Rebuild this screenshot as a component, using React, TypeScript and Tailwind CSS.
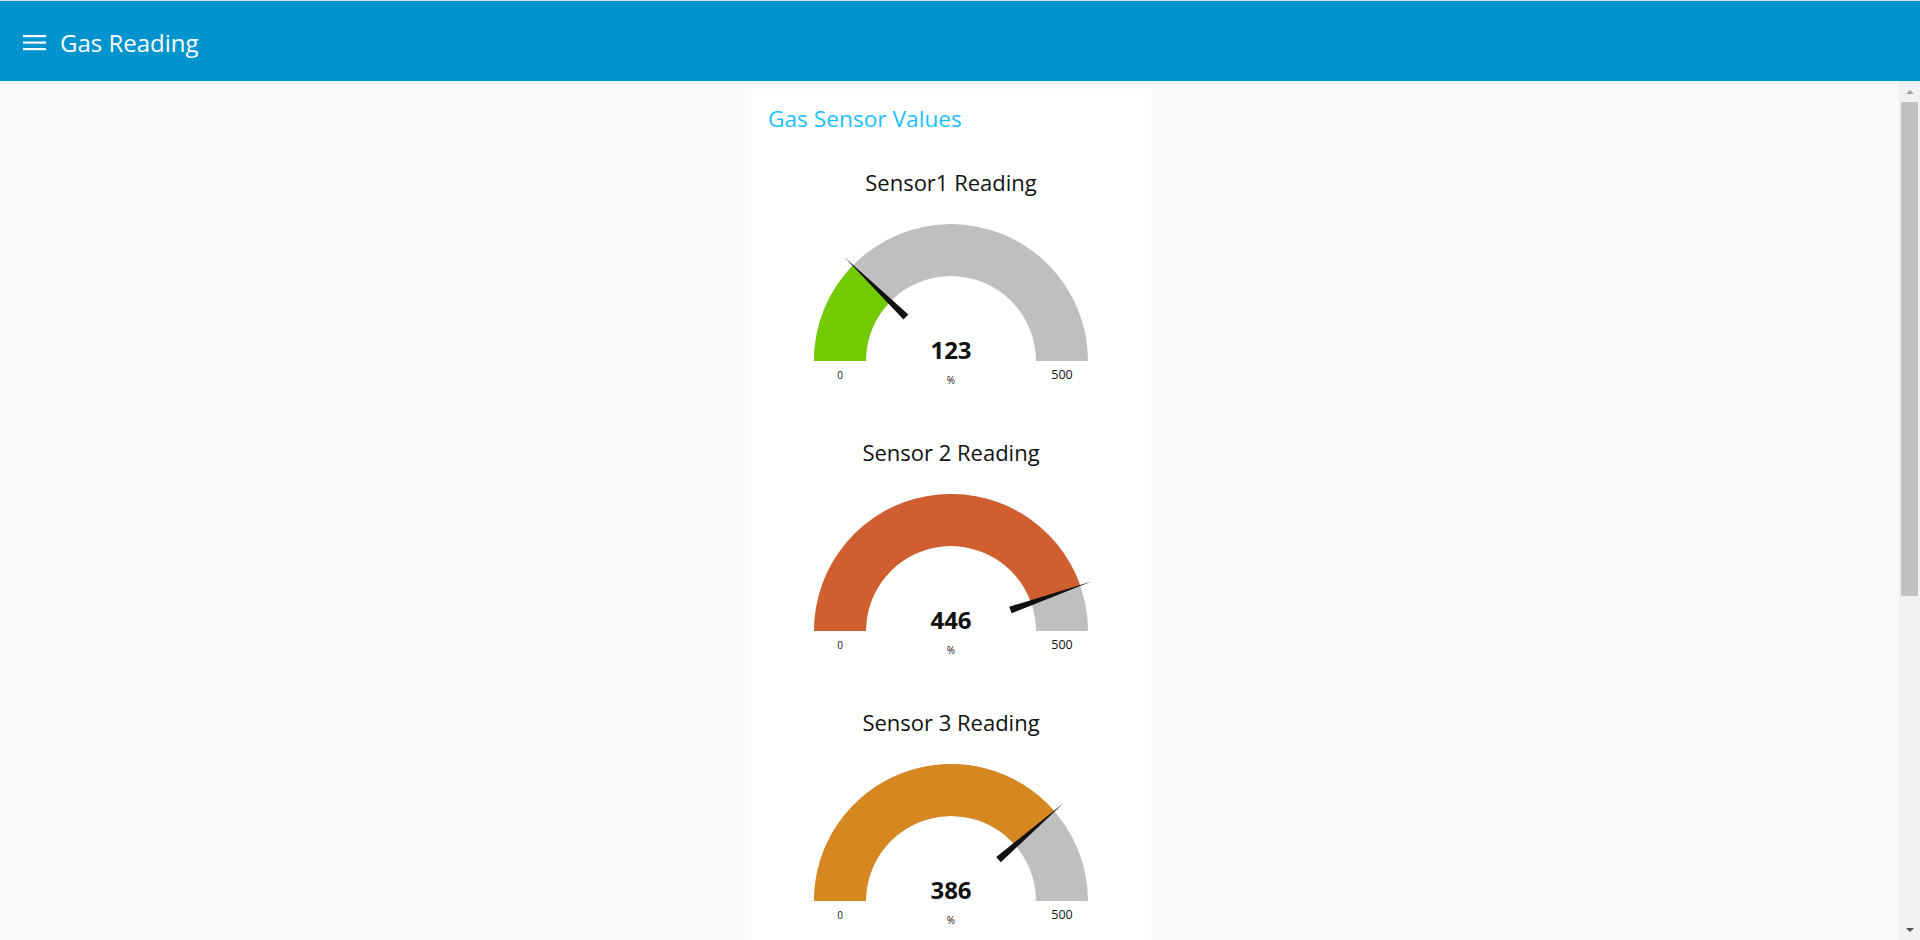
import React from 'react';

interface Sensor {
  title: string;
  value: number;
  color: string;
}

const sensors: Sensor[] = [
  { title: 'Sensor1 Reading', value: 123, color: '#72cb00' },
  { title: 'Sensor 2 Reading', value: 446, color: '#d15e2f' },
  { title: 'Sensor 3 Reading', value: 386, color: '#d6871f' },
];

const MAX = 500;
const CX = 200;
const CY = 159;
const RO = 137;
const RI = 85;

const pt = (r: number, a: number) => [CX - r * Math.cos(a), CY - r * Math.sin(a)];

// band from angle a0 to a1 (0 = left end), radians
const band = (a0: number, a1: number) => {
  const [x1, y1] = pt(RO, a0);
  const [x2, y2] = pt(RO, a1);
  const [x3, y3] = pt(RI, a1);
  const [x4, y4] = pt(RI, a0);
  const large = a1 - a0 > Math.PI ? 1 : 0;
  return `M${x1},${y1} A${RO},${RO} 0 ${large} 1 ${x2},${y2} L${x3},${y3} A${RI},${RI} 0 ${large} 0 ${x4},${y4} Z`;
};

const needle = (a: number) => {
  const [bx, by] = pt(63, a);
  const [tx, ty] = pt(149, a);
  const px = Math.sin(a) * 3.5;
  const py = -Math.cos(a) * 3.5;
  return `${bx + px},${by + py} ${tx},${ty} ${bx - px},${by - py}`;
};

const Gauge: React.FC<{ s: Sensor }> = ({ s }) => {
  const a = (s.value / MAX) * Math.PI;
  return (
    <div className="flex flex-col items-center">
      <div className="h-[40px] leading-[40px] text-[22px] text-[#111]">{s.title}</div>
      <svg width={400} height={230} className="block">
        <path d={band(0, Math.PI)} fill="#bfbfbf" />
        <path d={band(0, a)} fill={s.color} />
        <polygon points={needle(a)} fill="#111" />
        <text x={CX} y={CY - 2} textAnchor="middle" className="font-bold text-[24px] fill-[#111]">{s.value}</text>
        <text x={CX - 111} y={CY + 18} textAnchor="middle" className="text-[10px] fill-[#111]">0</text>
        <text x={CX + 111} y={CY + 18} textAnchor="middle" className="text-[12.5px] fill-[#111]">{MAX}</text>
        <text x={CX} y={CY + 23} textAnchor="middle" className="text-[10px] fill-[#111]">%</text>
      </svg>
    </div>
  );
};

export default function App() {
  return (
    <div className="h-[940px] flex flex-col overflow-hidden bg-[#fafafa] font-['Open_Sans','Noto_Sans',sans-serif]">
      <div className="h-[1px] bg-[#dcdcdc]" />
      <header className="h-[80px] bg-[#0094ce] flex items-center pl-[23px] gap-[14px] text-white shrink-0">
        <svg width={23} height={16} viewBox="0 0 23 16" className="mt-[4px]">
          <rect x={0} y={0} width={23} height={2.2} fill="#fff" />
          <rect x={0} y={6.5} width={23} height={2.2} fill="#fff" />
          <rect x={0} y={13} width={23} height={2.2} fill="#fff" />
        </svg>
        <span className="text-[24px] leading-none mt-[4px]">Gas Reading</span>
      </header>
      <div className="flex flex-1 min-h-0">
        <main className="flex-1 flex justify-center pl-[3px] pt-[8px] overflow-hidden">
          <section className="w-[400px] bg-white shrink-0 self-start">
            <h2 className="px-[17px] pt-[15px] h-[73px] text-[22.7px] leading-[30px] text-[#1bbfff] font-normal">Gas Sensor Values</h2>
            {sensors.map(s => (
              <Gauge key={s.title} s={s} />
            ))}
          </section>
        </main>
        <div className="w-[21px] bg-[#f1f1f1] flex flex-col shrink-0">
          <div className="h-[21px] flex items-center justify-center">
            <div className="w-0 h-0 border-x-[4.5px] border-x-transparent border-b-[4.5px] border-b-[#a3a3a3]" />
          </div>
          <div className="h-[494px] mx-[2px] bg-[#c1c1c1]" />
          <div className="flex-1" />
          <div className="h-[21px] flex items-center justify-center">
            <div className="w-0 h-0 border-x-[4.5px] border-x-transparent border-t-[4.5px] border-t-[#505050]" />
          </div>
        </div>
      </div>
    </div>
  );
}
